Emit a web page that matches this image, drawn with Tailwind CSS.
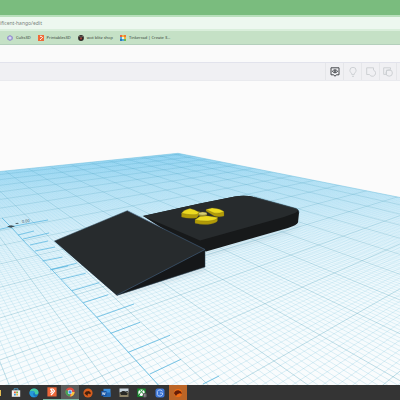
<!DOCTYPE html>
<html lang="en">
<head>
<meta charset="utf-8">
<title>Tinkercad editor</title>
<script src="https://cdn.jsdelivr.net/npm/@tailwindcss/browser@4"></script>
</head>
<body class="flex h-screen flex-col overflow-hidden bg-[#fbfbfb] font-['Noto_Sans',sans-serif]">
<header class="shrink-0">
  <div class="h-[15px] bg-[#7abc7e]"></div>
  <div class="border-y-2 border-t-[#b9dfbc] border-b-[#d9eedb] bg-[#edf7ef]">
    <input aria-label="Address" value="ificent-hango/edit" class="block h-3 w-full bg-transparent text-[5px] text-[#7b857d] outline-none">
  </div>
  <nav aria-label="Bookmarks" class="flex h-[14px] items-center gap-[7px] border-b border-[#b3cfbb] bg-[#c5e1c6] pl-[7px] text-[4px] whitespace-nowrap text-[#354138]">
    <a href="#" class="flex items-center gap-[3px]">
      <svg class="size-[6px]" viewBox="0 0 6 6"><path d="M3 .5 5.3 1.8v2.5L3 5.5.7 4.3V1.8Z" fill="#b7b4e4" stroke="#8279c8" stroke-width=".7"/><circle cx="3" cy="3" r=".9" fill="#e8e7fa"/></svg>Cults3D</a>
    <a href="#" class="flex items-center gap-[3px]">
      <svg class="size-[6px]" viewBox="0 0 6 6"><path fill="#ef6a38" d="M0 0h6v6H0z"/><path d="M2 1.300h1.400l1.200 1.200-1 .8-1.400 1.600" fill="none" stroke="#fff" stroke-width="1"/></svg>Printables3D</a>
    <a href="#" class="flex items-center gap-[3px]">
      <svg class="size-[6px]" viewBox="0 0 6 6"><circle cx="3" cy="3" r="2.900" fill="#2d2826"/><path d="m1 1 2 1.300L5 1" stroke="#a89b8f" stroke-width=".6" fill="none"/><path d="M1.600 2.800h2.800L3 5Z" fill="#b8403a"/></svg>wot blitz shop</a>
    <a href="#" class="flex items-center gap-[3px]">
      <svg class="size-[6px]" viewBox="0 0 6 6"><path fill="#e86340" d="M0 0h2v2H0z"/><path fill="#f4b63d" d="M2 0h2v2H2zM4 2h2v2H4z"/><path fill="#eb7b35" d="M4 0h2v2H4z"/><path fill="#51a9dc" d="M0 2h2v2H0zM2 4h2v2H2z"/><path fill="#e9f0dc" d="M2 2h2v2H2z"/><path fill="#2d78bc" d="M0 4h2v2H0z"/><path fill="#67b957" d="M4 4h2v2H4z"/></svg>Tinkercad | Create 3...</a>
  </nav>
  <div class="h-[18px] border-b border-[#e2e3ec] bg-[#fafafa]"></div>
  <div class="flex h-[18px] justify-end border-b border-[#e9eaee] bg-[#f0f0f3] pr-[3px]">
    <button aria-label="View" class="grid w-[18px] place-items-center border-l border-[#e5e6e9]">
      <svg class="size-[10px]" viewBox="0 0 10 10" fill="none" stroke="#44474b" stroke-width="1"><path d="M1 .8h8v7H6.300L5 9.300 3.700 7.800H1Z"/><path d="M2.300 4.300Q5 1.200 7.700 4.300 5 7.400 2.300 4.300Z"/><circle cx="5" cy="4.300" r=".8"/></svg></button>
    <button aria-label="Show all" class="grid w-[18px] place-items-center border-l border-[#e5e6e9]">
      <svg class="size-[10px]" viewBox="0 0 10 10" fill="none" stroke="#c9cdd0" stroke-width=".9"><path d="M3.700 7.400C3.700 5.800 1.900 5.400 1.900 3.300a3.100 3 0 0 1 6.200 0c0 2.100-1.800 2.500-1.800 4.100ZM4 9.300h2"/></svg></button>
    <button aria-label="Group" class="grid w-[18px] place-items-center border-l border-[#e5e6e9]">
      <svg class="size-[10px]" viewBox="0 0 10 10" fill="none" stroke="#c9cdd0" stroke-width=".9"><path d="M.7.8h6.800v2.300a3.200 3.200 0 1 1-4 4.400H.7Z"/></svg></button>
    <button aria-label="Ungroup" class="grid w-[18px] place-items-center border-x border-[#e5e6e9]">
      <svg class="size-[10px]" viewBox="0 0 10 10" fill="none" stroke="#c9cdd0" stroke-width=".9"><path d="M3 7.400H.7V.8h6.800v1.800"/><circle cx="6.200" cy="6" r="3.200"/><path d="M3.400 7.400V3.200h4.200"/></svg></button>
  </div>
</header>

<main class="min-h-0 flex-1">
  <svg class="block size-full" viewBox="0 81 400 304" preserveAspectRatio="xMidYMin slice" role="img" aria-label="Workplane with wedge and slab">
    <defs>
      <linearGradient id="plane" gradientUnits="userSpaceOnUse" x1="180" y1="150" x2="190" y2="385">
        <stop offset="0" stop-color="#96d6f3"/><stop offset=".14" stop-color="#bfe6f7"/><stop offset=".35" stop-color="#e0f3fb"/><stop offset=".65" stop-color="#f2fafd"/><stop offset="1" stop-color="#fafcfd"/>
      </linearGradient>
      <linearGradient id="fine" gradientUnits="userSpaceOnUse" x1="0" y1="150" x2="0" y2="385">
        <stop offset="0" stop-color="#4fb4e0" stop-opacity=".04"/><stop offset=".2" stop-color="#4fb4e0" stop-opacity=".12"/><stop offset=".5" stop-color="#58b3d2" stop-opacity=".22"/><stop offset="1" stop-color="#58b3d2" stop-opacity=".36"/>
      </linearGradient>
      <linearGradient id="bold" gradientUnits="userSpaceOnUse" x1="0" y1="150" x2="0" y2="385">
        <stop offset="0" stop-color="#3f9dc2" stop-opacity=".32"/><stop offset=".4" stop-color="#4a9fb9" stop-opacity=".42"/><stop offset="1" stop-color="#4a9fb9" stop-opacity=".5"/>
      </linearGradient>
      <clipPath id="clip"><path d="M0 171.500 178 153.300 400 197.500V400H0Z"/></clipPath>
      <filter id="soft"><feGaussianBlur stdDeviation="2"/></filter>
    </defs>
    <path d="M0 171.500 178 153.300 400 197.500V400H0Z" fill="url(#plane)"/>
    <g clip-path="url(#clip)" fill="none">
      <path id="minor" stroke="url(#fine)" stroke-width=".6"/>
      <path id="major" stroke="url(#bold)" stroke-width=".7"/>
    </g>
    <path d="M0 171.500 178 153.300 400 197.500" fill="none" stroke="#7cc5e0" stroke-width=".6"/>
    <g fill="none" stroke="#52b2de" stroke-width=".9" stroke-opacity=".8">
      <path d="M2 218 11 227 26.700 244 42.700 260 96.700 317.300 128.300 352.300 158.300 385"/>
      <path d="M0 229.300 11 226.700 48 220M18 235l16-4M23 239l26-6M30 245l18-4M35 251l20-4M42.500 261l20-4M50 270l18-4M51.700 269.300 76.700 263.300M61 279.300 85.700 273.300M72 290.700 99.300 282.700M83.300 302.700 108.300 294.700M96.700 317.300 134 304M110.700 333.300 140 322.300M128.300 352.300 170 335.300M150 374 181 359.300M203 384 219 376"/>
    </g>
    <g fill="#3c4b52"><path d="m7 226.500 4-1.300 4 1-4 1.600ZM15 223.500l3-.8.8.9-2.500.4Z"/></g>
    <text x="22" y="223" font-size="4" fill="#4c626b" transform="rotate(-7 22 223)">0.00</text>

    <path d="M205 254 293 229 299 222v4l-10 6-84 24ZM117 297l88-27v-3l-88 28Z" fill="#7891a0" opacity=".3" filter="url(#soft)"/>
    <path d="M143 216 200 203.500 235 196.500Q245 194.700 254 197L296 208.500Q299.500 210 299 213L298 222.500Q297 225 288 228L206 251.500 190 246Z" fill="#17191a"/>
    <path d="M143 216 200 203.500 235 196.500Q245 194.700 254 197L296 208.500Q300 210.500 295 213L284 217 200 240.500Z" fill="#272b2d"/>
    <path d="M254 197 296 208.500Q299.500 210 299 213" fill="none" stroke="#3e5663" stroke-width=".6"/>

    <g stroke="#716617" stroke-width=".3">
      <path d="M181.500 213v4q6 2 15 1l3-3.500v-3Z" fill="#b29b08"/>
      <path d="M181.500 213.300Q184 209.500 190 208.500 195 209.500 199 212.200L197 214.500Q189 215.300 181.500 213.300Z" fill="#edda20"/>
      <path d="M206 209.500v1.500l8.500 5.300q6 1.200 9.500-.2v-4.600Z" fill="#b29b08"/>
      <path d="M206 209.500 212 207.900Q221 208.500 224 211.800 220 213.800 214 213Z" fill="#edda20"/>
      <path d="M195 219.500v3.700q8 2 16 .7 6-1.300 6.500-3.200v-3.500Z" fill="#b29b08"/>
      <path d="M195 219.700 200 216.300Q206 215 212 216.500L217.500 217.600Q217 220.300 208 221 200 221.300 195 219.700Z" fill="#edda20"/>
      <ellipse cx="202.700" cy="214.300" rx="4.300" ry="1.900" fill="#a99c3d"/>
      <ellipse cx="202.700" cy="213.600" rx="4.100" ry="1.500" fill="#d8cf75"/>
    </g>

    <path d="M54.500 241 117 295.500 205 267V249.500Z" fill="#151719"/>
    <path d="M54.500 241 127.300 210.700 205 249.500 117 295Z" fill="#272b2d"/>
    <path d="M127.300 210.700 205 249.500 117 295" fill="none" stroke="#405c79" stroke-width=".7"/>
    <path d="M127.300 210.700 54.500 241 117 295.300 205 267V249.500" fill="none" stroke="#2c4557" stroke-width=".5"/>
  </svg>
</main>

<footer class="flex h-[15px] shrink-0 items-stretch bg-[#343434]">
  <button aria-label="Files" class="w-[7px]"><svg class="h-[8px] w-[2px]" viewBox="0 0 2 8"><path fill="#e5bd54" d="M0 1h1v6H0z"/></svg></button>
  <button aria-label="Store" class="grid w-[18px] place-items-center"><svg class="size-[10px]" viewBox="0 0 10 10"><path d="M3 2.500V.8h4v1.700" fill="none" stroke="#59aeda" stroke-width=".8"/><path fill="#f0f0f0" d="M.8 2.300h8.400v6.500H.8z"/><path fill="#e65a3a" d="M3 3.500h1.800v1.800H3z"/><path fill="#75b543" d="M5.200 3.500H7v1.800H5.200z"/><path fill="#3a9de0" d="M3 5.700h1.800v1.800H3z"/><path fill="#edb93c" d="M5.200 5.700H7v1.800H5.200z"/></svg></button>
  <button aria-label="Edge" class="grid w-[18px] place-items-center"><svg class="size-[10px]" viewBox="0 0 10 10"><circle cx="5" cy="5" r="4.500" fill="#1876bd"/><path d="M.6 4C1.500-.8 9.300-.4 9.500 4.300 9.600 6.700 6.300 7 5.800 5.800 6.500 3.400 3.200 2.500.6 4Z" fill="#45cba0"/><path d="M.6 4C3 2.300 5.700 3 5.900 4.800 3.500 4.500 3.400 8 6.800 8.400 3 10.600-.4 7 .6 4Z" fill="#2798d8"/></svg></button>
  <button aria-label="Printables" class="grid w-[18px] place-items-center border-b border-[#7bb7a1]"><svg class="size-[10px]" viewBox="0 0 10 10"><path fill="#ec6739" d="M.4.300h9.200v9.200H.4z"/><path d="M3.400 2h2.500l1.600 2-1.600 2L4 8M3.400 2l2 2.300-2 1.400" fill="none" stroke="#fff" stroke-width="1.200"/></svg></button>
  <button aria-label="Chrome" class="grid w-[18px] place-items-center border-b border-[#7bb7a1] bg-[#5a5c5b]"><svg class="size-[10px]" viewBox="0 0 10 10"><circle cx="5" cy="5" r="4.600" fill="#e04c3f"/><path d="M5 5 1 2.700A4.600 4.600 0 0 0 5 9.600Z" fill="#43a35b"/><path d="M5 5h4.600A4.600 4.600 0 0 1 5 9.600L7 6Z" fill="#f4c63e"/><circle cx="5" cy="5" r="2.200" fill="#fff"/><circle cx="5" cy="5" r="1.700" fill="#438be5"/></svg></button>
  <button aria-label="Orange disc" class="grid w-[18px] place-items-center"><svg class="size-[10px]" viewBox="0 0 10 10"><circle cx="5" cy="5" r="4.600" fill="#d75d1d"/><path d="M1.500 5.500 3 3.500l3-.5L8 5 7 6.500 6 5.500 4.800 6 4.500 8Z" fill="#45200e"/></svg></button>
  <button aria-label="Word" class="grid w-[18px] place-items-center"><svg class="size-[10px]" viewBox="0 0 10 10"><path fill="#3c91de" d="M2.500.8h7v7.900h-7z"/><path fill="#2369b7" d="M2.500 4.500h7v4.200h-7z"/><path fill="#1753a1" d="M.2 3h5.300v5H.2z"/><path d="m1.300 4.300.7 2.500.8-2.300.8 2.300.7-2.500" stroke="#fff" stroke-width=".6" fill="none"/></svg></button>
  <button aria-label="Tank game" class="grid w-[18px] place-items-center"><svg class="size-[10px]" viewBox="0 0 10 10"><path fill="#c6d3dc" d="M.5.500h9v4h-9z"/><path fill="#8d8468" d="M.5 4.500h9v4.500h-9z"/><path fill="#292a27" d="M1 4.800 3.500 3h2l.5.600 3-.5v.7L7 4.300l1.800 1.200L8 7H2Z"/></svg></button>
  <button aria-label="Xbox" class="grid w-[18px] place-items-center"><svg class="size-[10px]" viewBox="0 0 10 10"><path fill="#16872b" d="M.3.500h8.400v8.500H.3z"/><circle cx="4.500" cy="4.700" r="3.200" fill="#fff"/><path d="M2 7.300Q3 5 4.500 3.800 6 5 7 7.300M2.500 2.200 4.500 3.400 6.500 2.200" stroke="#16872b" stroke-width="1" fill="none"/><circle cx="7.900" cy="7.400" r="2.300" fill="#555"/><path d="M7.900 6v2.800" stroke="#ddd" stroke-width=".6"/></svg></button>
  <button aria-label="Cura" class="grid w-[18px] place-items-center"><svg class="size-[10px]" viewBox="0 0 10 10"><rect x=".5" y=".5" width="9" height="9" rx="2" fill="#3b75d6"/><path d="M7.500 3.300 6 2H3.500L2.300 3.500v3L3.500 8H6l1.500-1.300V5H5" fill="none" stroke="#c3d7f5" stroke-width=".9"/></svg></button>
  <button aria-label="Orange app" class="grid w-[18px] place-items-center bg-[#bb6527]"><svg class="size-[10px]" viewBox="0 0 10 10"><circle cx="5" cy="5" r="4" fill="#f06c12"/><path d="M1 5.200Q2 2 5.500 2.200 8.600 3 9 5.800L6.500 5.300 4 6.500 3 8Z" fill="#651e08"/></svg></button>
</footer>

<script>
// Perspective projection of workplane coordinates; one unit is one major square.
const EDGE_A = 15, EDGE_B = 10, G = 0.1623, H = 0.1072;
const project = (a, b) => {
  const d = 1 + G * a + H * b;
  return ((274 - 17.5 * a + 79.9 * b) / d).toFixed(2) + ' ' + ((361 + 14.77 * a + 9.755 * b) / d).toFixed(2);
};
let minor = '', major = '';
for (let i = -60; i <= EDGE_A * 10; i++) {
  const a = i / 10, start = (-0.7 - G * a) / H;
  const line = 'M' + project(a, start) + 'L' + project(a, EDGE_B);
  if (i % 10) minor += line; else major += line;
}
for (let i = -140; i <= EDGE_B * 10; i++) {
  const b = i / 10, start = (-0.7 - H * b) / G;
  if (start < EDGE_A) {
    const line = 'M' + project(start, b) + 'L' + project(EDGE_A, b);
    if (i % 10) minor += line; else major += line;
  }
}
document.getElementById('minor').setAttribute('d', minor);
document.getElementById('major').setAttribute('d', major);
</script>
</body>
</html>
